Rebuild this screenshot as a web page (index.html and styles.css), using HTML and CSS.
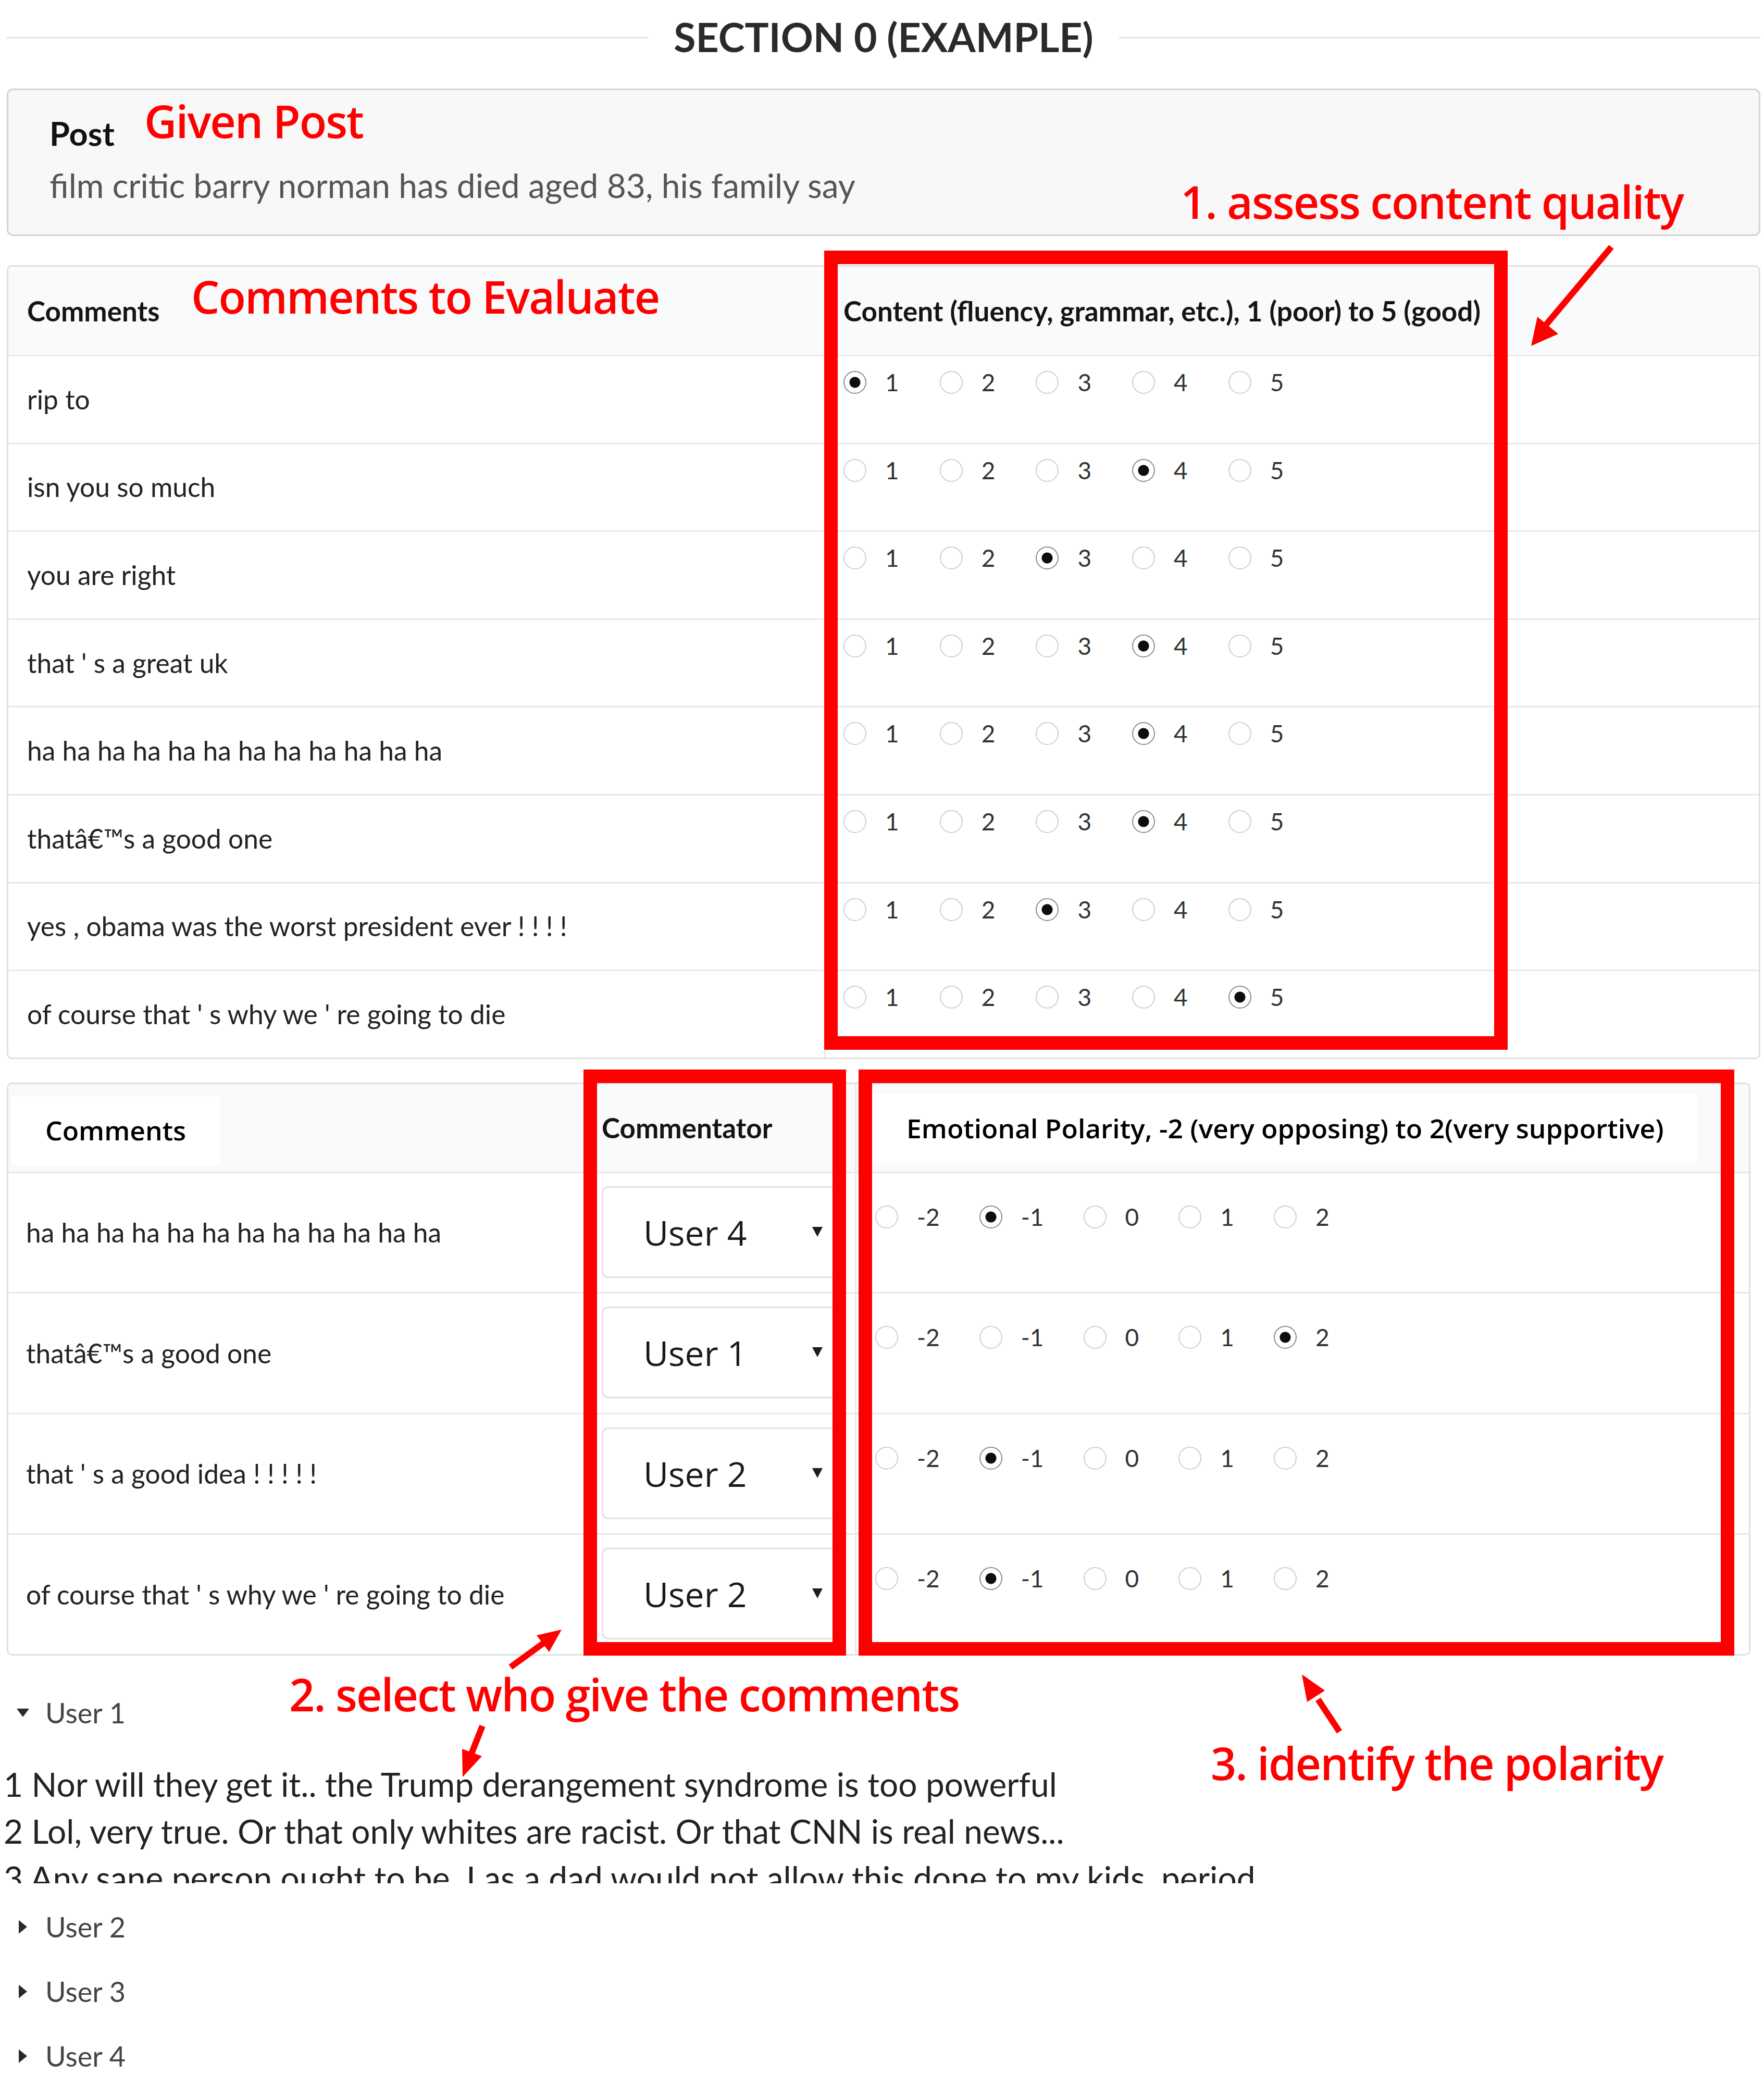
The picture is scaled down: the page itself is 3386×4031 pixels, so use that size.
FILE: index.html
```html
<!DOCTYPE html>
<html lang="en">
<head>
<meta charset="utf-8">
<title>Section 0 (Example)</title>
<link rel="stylesheet" href="styles.css">
</head>
<body>
<main class="page">
  <div class="divider">
    <span class="divider-line"></span>
    <h2 class="divider-title">SECTION 0 (EXAMPLE)</h2>
    <span class="divider-line"></span>
  </div>

  <section class="message">
    <div class="message-header">Post</div>
    <p class="message-text">film critic barry norman has died aged 83, his family say</p>
  </section>

  <div class="table t1">
    <div class="row head">
      <div class="cell th">Comments</div>
      <div class="cell th col-b">Content (fluency, grammar, etc.), 1 (poor) to 5 (good)</div>
    </div>
    <div class="row">
      <div class="cell">rip to</div>
      <div class="cell col-b opts">
        <label class="opt"><input type="radio" name="c1" checked><span>1</span></label>
        <label class="opt"><input type="radio" name="c1"><span>2</span></label>
        <label class="opt"><input type="radio" name="c1"><span>3</span></label>
        <label class="opt"><input type="radio" name="c1"><span>4</span></label>
        <label class="opt"><input type="radio" name="c1"><span>5</span></label>
      </div>
    </div>
    <div class="row">
      <div class="cell">isn you so much</div>
      <div class="cell col-b opts">
        <label class="opt"><input type="radio" name="c2"><span>1</span></label>
        <label class="opt"><input type="radio" name="c2"><span>2</span></label>
        <label class="opt"><input type="radio" name="c2"><span>3</span></label>
        <label class="opt"><input type="radio" name="c2" checked><span>4</span></label>
        <label class="opt"><input type="radio" name="c2"><span>5</span></label>
      </div>
    </div>
    <div class="row">
      <div class="cell">you are right</div>
      <div class="cell col-b opts">
        <label class="opt"><input type="radio" name="c3"><span>1</span></label>
        <label class="opt"><input type="radio" name="c3"><span>2</span></label>
        <label class="opt"><input type="radio" name="c3" checked><span>3</span></label>
        <label class="opt"><input type="radio" name="c3"><span>4</span></label>
        <label class="opt"><input type="radio" name="c3"><span>5</span></label>
      </div>
    </div>
    <div class="row">
      <div class="cell">that ' s a great uk</div>
      <div class="cell col-b opts">
        <label class="opt"><input type="radio" name="c4"><span>1</span></label>
        <label class="opt"><input type="radio" name="c4"><span>2</span></label>
        <label class="opt"><input type="radio" name="c4"><span>3</span></label>
        <label class="opt"><input type="radio" name="c4" checked><span>4</span></label>
        <label class="opt"><input type="radio" name="c4"><span>5</span></label>
      </div>
    </div>
    <div class="row">
      <div class="cell">ha ha ha ha ha ha ha ha ha ha ha ha</div>
      <div class="cell col-b opts">
        <label class="opt"><input type="radio" name="c5"><span>1</span></label>
        <label class="opt"><input type="radio" name="c5"><span>2</span></label>
        <label class="opt"><input type="radio" name="c5"><span>3</span></label>
        <label class="opt"><input type="radio" name="c5" checked><span>4</span></label>
        <label class="opt"><input type="radio" name="c5"><span>5</span></label>
      </div>
    </div>
    <div class="row">
      <div class="cell">thatâ€™s a good one</div>
      <div class="cell col-b opts">
        <label class="opt"><input type="radio" name="c6"><span>1</span></label>
        <label class="opt"><input type="radio" name="c6"><span>2</span></label>
        <label class="opt"><input type="radio" name="c6"><span>3</span></label>
        <label class="opt"><input type="radio" name="c6" checked><span>4</span></label>
        <label class="opt"><input type="radio" name="c6"><span>5</span></label>
      </div>
    </div>
    <div class="row">
      <div class="cell">yes , obama was the worst president ever ! ! ! !</div>
      <div class="cell col-b opts">
        <label class="opt"><input type="radio" name="c7"><span>1</span></label>
        <label class="opt"><input type="radio" name="c7"><span>2</span></label>
        <label class="opt"><input type="radio" name="c7" checked><span>3</span></label>
        <label class="opt"><input type="radio" name="c7"><span>4</span></label>
        <label class="opt"><input type="radio" name="c7"><span>5</span></label>
      </div>
    </div>
    <div class="row">
      <div class="cell">of course that ' s why we ' re going to die</div>
      <div class="cell col-b opts">
        <label class="opt"><input type="radio" name="c8"><span>1</span></label>
        <label class="opt"><input type="radio" name="c8"><span>2</span></label>
        <label class="opt"><input type="radio" name="c8"><span>3</span></label>
        <label class="opt"><input type="radio" name="c8"><span>4</span></label>
        <label class="opt"><input type="radio" name="c8" checked><span>5</span></label>
      </div>
    </div>
  </div>

  <div class="table t2">
    <div class="row head">
      <div class="cell th boxed-cell"><span class="head-box head-box-a">Comments</span></div>
      <div class="cell th col-b">Commentator</div>
      <div class="cell th col-c boxed-cell"><span class="head-box head-box-c">Emotional Polarity, -2 (very opposing) to 2(very supportive)</span></div>
    </div>
    <div class="row">
      <div class="cell">ha ha ha ha ha ha ha ha ha ha ha ha</div>
      <div class="cell col-b sel-cell"><span class="select-wrap"><select class="user-select"><option>User 1</option><option>User 2</option><option>User 3</option><option selected>User 4</option></select></span></div>
      <div class="cell col-c opts">
        <label class="opt"><input type="radio" name="p1"><span>-2</span></label>
        <label class="opt"><input type="radio" name="p1" checked><span>-1</span></label>
        <label class="opt"><input type="radio" name="p1"><span>0</span></label>
        <label class="opt"><input type="radio" name="p1"><span>1</span></label>
        <label class="opt"><input type="radio" name="p1"><span>2</span></label>
      </div>
    </div>
    <div class="row">
      <div class="cell">thatâ€™s a good one</div>
      <div class="cell col-b sel-cell"><span class="select-wrap"><select class="user-select"><option selected>User 1</option><option>User 2</option><option>User 3</option><option>User 4</option></select></span></div>
      <div class="cell col-c opts">
        <label class="opt"><input type="radio" name="p2"><span>-2</span></label>
        <label class="opt"><input type="radio" name="p2"><span>-1</span></label>
        <label class="opt"><input type="radio" name="p2"><span>0</span></label>
        <label class="opt"><input type="radio" name="p2"><span>1</span></label>
        <label class="opt"><input type="radio" name="p2" checked><span>2</span></label>
      </div>
    </div>
    <div class="row">
      <div class="cell">that ' s a good idea ! ! ! ! !</div>
      <div class="cell col-b sel-cell"><span class="select-wrap"><select class="user-select"><option>User 1</option><option selected>User 2</option><option>User 3</option><option>User 4</option></select></span></div>
      <div class="cell col-c opts">
        <label class="opt"><input type="radio" name="p3"><span>-2</span></label>
        <label class="opt"><input type="radio" name="p3" checked><span>-1</span></label>
        <label class="opt"><input type="radio" name="p3"><span>0</span></label>
        <label class="opt"><input type="radio" name="p3"><span>1</span></label>
        <label class="opt"><input type="radio" name="p3"><span>2</span></label>
      </div>
    </div>
    <div class="row">
      <div class="cell">of course that ' s why we ' re going to die</div>
      <div class="cell col-b sel-cell"><span class="select-wrap"><select class="user-select"><option>User 1</option><option selected>User 2</option><option>User 3</option><option>User 4</option></select></span></div>
      <div class="cell col-c opts">
        <label class="opt"><input type="radio" name="p4"><span>-2</span></label>
        <label class="opt"><input type="radio" name="p4" checked><span>-1</span></label>
        <label class="opt"><input type="radio" name="p4"><span>0</span></label>
        <label class="opt"><input type="radio" name="p4"><span>1</span></label>
        <label class="opt"><input type="radio" name="p4"><span>2</span></label>
      </div>
    </div>
  </div>

  <section class="users">
    <details class="user" open>
      <summary>User 1</summary>
      <div class="user-comments">
        <p>1 Nor will they get it.. the Trump derangement syndrome is too powerful</p>
        <p>2 Lol, very true. Or that only whites are racist. Or that CNN is real news...</p>
        <p>3 Any sane person ought to be. I as a dad would not allow this done to my kids. period</p>
      </div>
    </details>
    <details class="user"><summary>User 2</summary></details>
    <details class="user"><summary>User 3</summary></details>
    <details class="user"><summary>User 4</summary></details>
  </section>

  <div class="red-box box-1"></div>
  <div class="red-box box-2"></div>
  <div class="red-box box-3"></div>

  <div class="note note-post">Given Post</div>
  <div class="note note-comments">Comments to Evaluate</div>
  <div class="note note-1">1. assess content quality</div>
  <div class="note note-2">2. select who give the comments</div>
  <div class="note note-3">3. identify the polarity</div>

  <svg class="arrows" width="3386" height="4031" viewBox="0 0 3386 4031" aria-hidden="true">
    <g stroke="#ff0000" stroke-width="12" fill="none">
      <line x1="3093" y1="474" x2="2962" y2="630"/>
      <line x1="980" y1="3200" x2="1046" y2="3152"/>
      <line x1="926" y1="3313" x2="905" y2="3366"/>
      <line x1="2571" y1="3324" x2="2530" y2="3262"/>
    </g>
    <g fill="#ff0000">
      <polygon points="2939,664 2951,608 2991,641"/>
      <polygon points="1078,3128 1054,3171 1030,3139"/>
      <polygon points="888,3411 925,3371 887,3357"/>
      <polygon points="2499,3214 2543,3245 2509,3267"/>
    </g>
  </svg>
</main>
</body>
</html>
```

FILE: styles.css
```css
html, body {
  margin: 0;
  padding: 0;
  background: #ffffff;
}

body {
  font-family: Lato, "Open Sans", sans-serif;
  color: #222222;
}

.page {
  position: relative;
  width: 3386px;
  height: 4031px;
  box-sizing: border-box;
  padding: 0 7px 0 13px;
  overflow: hidden;
}

/* ---------- section divider ---------- */
.divider {
  display: flex;
  align-items: center;
  gap: 49px;
  height: 144px;
}

.divider-line {
  flex: 1;
  height: 3px;
  background: #e2e2e3;
}

.divider-title {
  margin: 0 0 4px;
  font: 700 77px/1 Lato, sans-serif;
  color: #2a2a2a;
  white-space: nowrap;
}

/* ---------- post message ---------- */
.message {
  margin-top: 26px;
  height: 283px;
  box-sizing: border-box;
  border: 3px solid #d4d4d5;
  border-radius: 12px;
  background: #f8f8f9;
  padding: 45px 80px 0 79px;
}

.message-header {
  font: 700 63px/76px Lato, sans-serif;
  color: #111111;
}

.message-text {
  margin: 24px 0 0;
  font: 400 64px/76px Lato, sans-serif;
  color: #555555;
}

/* ---------- tables ---------- */
.table {
  border: 3px solid #dfe0e0;
  border-radius: 10px;
  overflow: hidden;
  background: #ffffff;
}

.t1 {
  margin-top: 56px;
}

.t2 {
  margin-top: 45px;
  width: 3347px;
  box-sizing: border-box;
}

.row {
  display: grid;
  box-sizing: border-box;
  border-top: 3px solid #e9e9ea;
}

.row.head {
  border-top: 0;
  background: #f9fafb;
}

.t1 .row {
  grid-template-columns: 1566px 1fr;
  height: 168.6px;
}

.t1 .row.head {
  height: 169px;
}

.t2 .row {
  grid-template-columns: 1109px 516px 1fr;
  height: 231.5px;
}

.t2 .row.head {
  height: 168px;
}

.cell {
  display: flex;
  align-items: center;
  padding-left: 36px;
  font: 400 51.5px/1.2 Lato, sans-serif;
  color: #222222;
  white-space: nowrap;
  min-width: 0;
}

.t2 .cell {
  padding-left: 34px;
}

.th {
  font-weight: 700;
  font-size: 53px;
  color: #141414;
}

.col-b,
.col-c {
  border-left: 3px solid #e9e9ea;
}

.t1 .col-b {
  padding-left: 34px;
}

.t1 .opts {
  align-items: flex-start;
  padding-top: 27px;
}

.t2 .col-b {
  padding-left: 27px;
}

.t2 .col-c {
  padding-left: 36px;
}

.t2 .opts {
  align-items: flex-start;
  padding-top: 61px;
}

/* header boxes in the second table */
.boxed-cell {
  align-items: flex-start;
}

.t2 .boxed-cell {
  padding-left: 0;
}

.head-box {
  display: flex;
  align-items: center;
  box-sizing: border-box;
  height: 133px;
  background: #ffffff;
  font: 600 51.5px/1.2 "Open Sans", sans-serif;
  color: #000000;
}

.head-box-a {
  margin: 23px 0 0 6px;
  width: 401px;
  padding-left: 65px;
}

.head-box-c {
  margin: 19px 0 0 16px;
  width: 1597px;
  padding-left: 80px;
}

/* radio options */
.opt {
  display: inline-flex;
  align-items: center;
  margin-right: 78px;
  font: 400 46px/1 Lato, sans-serif;
  color: #333333;
}

.col-c .opt {
  margin-right: 76px;
}

.opt span {
  margin-left: 36px;
}

.opt input {
  -webkit-appearance: none;
  appearance: none;
  margin: 0;
  width: 44px;
  height: 44px;
  box-sizing: border-box;
  border: 2px solid #cfcfcf;
  border-radius: 50%;
  background: #ffffff;
}

.opt input:checked {
  border-color: #8c8c8c;
  background: radial-gradient(circle, #0d0d0d 0 10px, #ffffff 11px);
}

/* select */
.sel-cell {
  align-items: flex-start;
  padding-top: 25px;
}

.select-wrap {
  position: relative;
  display: block;
  width: 465px;
  height: 176px;
}

.select-wrap::after {
  content: "";
  position: absolute;
  left: 404px;
  top: 78px;
  width: 0;
  height: 0;
  border-left: 10px solid transparent;
  border-right: 10px solid transparent;
  border-top: 19px solid #1e1e1e;
}

.user-select {
  -webkit-appearance: none;
  appearance: none;
  width: 100%;
  height: 100%;
  box-sizing: border-box;
  margin: 0;
  border: 3px solid #e1e1e1;
  border-radius: 12px;
  background: #ffffff;
  padding: 0 0 0 77px;
  font: 400 66px "Open Sans", sans-serif;
  color: #1a1a1a;
}

/* ---------- user list ---------- */
.users {
  margin-top: 48px;
}

.user summary {
  display: flex;
  align-items: center;
  height: 124px;
  padding-left: 19px;
  list-style: none;
  font: 400 54px/1 Lato, sans-serif;
  color: #444444;
  cursor: pointer;
}

.user summary::-webkit-details-marker {
  display: none;
}

.user summary::before {
  content: "";
  flex: none;
  width: 24px;
  height: 26px;
  margin-right: 31px;
  background: #2a2a2a;
  clip-path: polygon(4px 0, 20px 13px, 4px 26px);
}

.user[open] summary::before {
  clip-path: polygon(0 5px, 24px 5px, 12px 21px);
}

.user-comments {
  margin: 30px 0 22px -6px;
  height: 235px;
  overflow: hidden;
  font: 400 64px/90px Lato, sans-serif;
  color: #222222;
}

.user-comments p {
  margin: 0;
  white-space: nowrap;
}

/* ---------- annotations ---------- */
.red-box {
  position: absolute;
  box-sizing: border-box;
  border: 26px solid #ff0000;
  pointer-events: none;
}

.box-1 {
  left: 1582px;
  top: 481px;
  width: 1312px;
  height: 1534px;
}

.box-2 {
  left: 1120px;
  top: 2053px;
  width: 504px;
  height: 1125px;
}

.box-3 {
  left: 1648px;
  top: 2053px;
  width: 1681px;
  height: 1125px;
}

.note {
  position: absolute;
  font: 600 86px/1 "Open Sans", sans-serif;
  letter-spacing: -2px;
  color: #ff0000;
  white-space: nowrap;
}

.note-post {
  left: 277px;
  top: 189px;
}

.note-comments {
  left: 367px;
  top: 526px;
}

.note-1 {
  left: 2266px;
  top: 344px;
}

.note-2 {
  left: 555px;
  top: 3209px;
}

.note-3 {
  left: 2324px;
  top: 3341px;
}

.arrows {
  position: absolute;
  left: 0;
  top: 0;
  pointer-events: none;
}
```
